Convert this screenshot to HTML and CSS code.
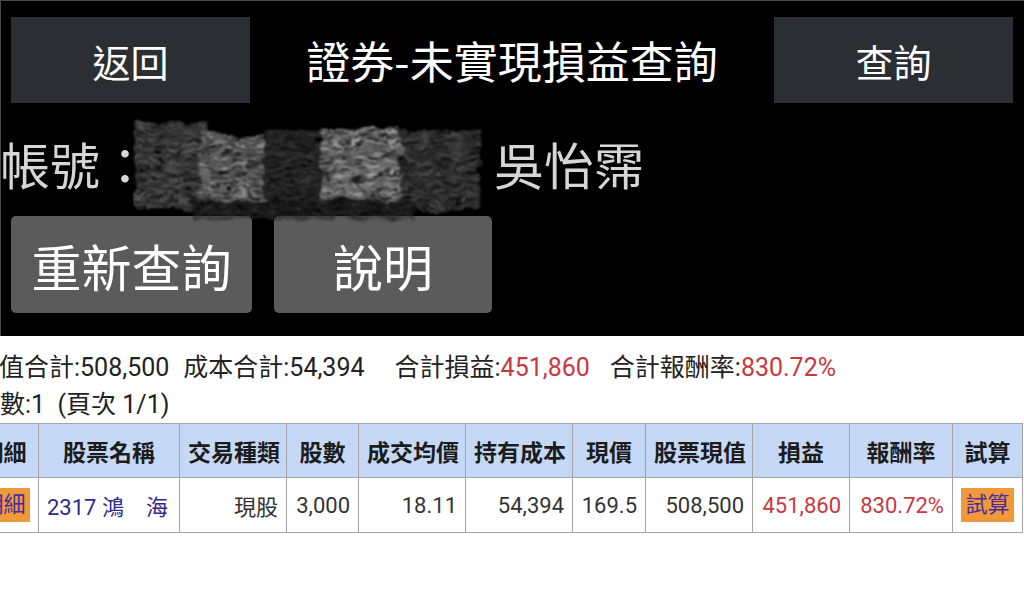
FILE: index.html
```html
<!DOCTYPE html>
<html lang="zh-Hant">
<head>
<meta charset="utf-8">
<title>證券-未實現損益查詢</title>
<link rel="stylesheet" href="styles.css">
</head>
<body>
<div class="top">
  <div class="bar">
    <div class="btn btn-dark">返回</div>
    <div class="title">證券-未實現損益查詢</div>
    <div class="btn btn-dark">查詢</div>
  </div>
  <div class="acct">
    <span class="label">帳號：</span>
    <svg class="redact" viewBox="0 0 350 107" width="350" height="107" aria-hidden="true">
      <defs>
        <filter id="soft" x="-10%" y="-15%" width="120%" height="130%">
          <feTurbulence type="fractalNoise" baseFrequency="0.06 0.8" numOctaves="2" seed="7" result="grain"/>
          <feColorMatrix in="grain" type="matrix" values="0 0 0 0 1  0 0 0 0 1  0 0 0 0 1  2.4 0 0 0 -0.6" result="mask"/>
          <feComposite in="SourceGraphic" in2="mask" operator="in" result="tex"/>
          <feTurbulence type="fractalNoise" baseFrequency="0.04 0.08" numOctaves="3" seed="3" result="noise"/>
          <feDisplacementMap in="tex" in2="noise" scale="14" xChannelSelector="R" yChannelSelector="G" result="disp"/>
          <feGaussianBlur in="disp" stdDeviation="1.1"/>
        </filter>
      </defs>
      <g filter="url(#soft)">
        <rect x="2" y="2" width="72" height="90" fill="#5a5a5a"/>
        <rect x="67" y="15" width="63" height="67" fill="#8a8a8a"/>
        <rect x="130" y="12" width="57" height="80" fill="#383838"/>
        <rect x="187" y="10" width="80" height="85" fill="#a0a0a0"/>
        <rect x="267" y="12" width="80" height="80" fill="#4c4c4c"/>
        <rect x="60" y="82" width="220" height="20" fill="#2a2a2a"/>
      </g>
    </svg>
    <span class="name">吳怡霈</span>
  </div>
  <div class="actions">
    <div class="btn btn-gray w1">重新查詢</div>
    <div class="btn btn-gray w2">說明</div>
  </div>
</div>
<div class="content">
  <div class="line line1"><span>值合計:508,500</span><span class="g1">成本合計:54,394</span><span class="g2">合計損益:<em class="red">451,860</em></span><span class="g3">合計報酬率:<em class="red">830.72%</em></span></div>
  <div class="line line2">數:1&nbsp;&nbsp;(頁次 1/1)</div>
  <table class="grid">
    <colgroup>
      <col class="c70"><col class="c141"><col class="c107"><col class="c72"><col class="c107"><col class="c107"><col class="c73"><col class="c107"><col class="c97"><col class="c103"><col class="c70">
    </colgroup>
    <thead>
      <tr>
        <th>明細</th><th>股票名稱</th><th>交易種類</th><th>股數</th><th>成交均價</th><th>持有成本</th><th>現價</th><th>股票現值</th><th>損益</th><th>報酬率</th><th>試算</th>
      </tr>
    </thead>
    <tbody>
      <tr>
        <td class="center"><span class="tbtn">明細</span></td>
        <td class="left stock">2317 鴻　海</td>
        <td>現股</td>
        <td>3,000</td>
        <td>18.11</td>
        <td>54,394</td>
        <td>169.5</td>
        <td>508,500</td>
        <td class="red">451,860</td>
        <td class="red">830.72%</td>
        <td class="center"><span class="tbtn">試算</span></td>
      </tr>
    </tbody>
  </table>
</div>
</body>
</html>
```

FILE: styles.css
```css
* { box-sizing: border-box; }

body {
  margin: 0;
  width: 1024px;
  height: 607px;
  overflow: hidden;
  background: #ffffff;
  font-family: Roboto, "Noto Sans CJK TC", sans-serif;
}

.top {
  background: #000;
  padding: 17px 11px 23px;
  box-shadow: inset 1px 1px 0 #4a4a4a;
}

.bar {
  display: flex;
  justify-content: space-between;
  align-items: center;
  height: 86px;
}

.btn {
  display: flex;
  align-items: center;
  justify-content: center;
  color: #fff;
  font-family: "Noto Sans CJK TC", sans-serif;
}

.btn-dark {
  width: 239px;
  height: 86px;
  background: #2b2e33;
  font-size: 38px;
}

.title {
  color: #fff;
  font-size: 44px;
  font-family: "Noto Sans CJK TC", sans-serif;
}

.acct {
  display: flex;
  align-items: center;
  height: 113px;
  padding-top: 7px;
  margin-left: -11px;
  font-family: "Noto Sans CJK TC", sans-serif;
}

.label,
.name {
  font-size: 50px;
  color: #d6d6d6;
  white-space: nowrap;
}

.redact {
  align-self: flex-start;
  margin-top: 8px;
  margin-left: -17px;
  position: relative;
  z-index: 1;
  flex: none;
}

.name {
  margin-left: 11px;
}

.actions {
  display: flex;
  gap: 22px;
  height: 97px;
}

.btn-gray {
  height: 97px;
  background: #5b5b5b;
  border-radius: 5px;
  font-size: 50px;
}

.w1 { width: 241px; }
.w2 { width: 218px; }

.content {
  padding-top: 13px;
  font-size: 25px;
  color: #222;
}

.line {
  line-height: 37px;
  white-space: nowrap;
}

.line1 { margin-left: -1px; }
.line2 { margin-left: 0; }

.g1 { margin-left: 14px; }
.g2 { margin-left: 30px; }
.g3 { margin-left: 20px; }

.red {
  color: #c9383f;
  font-style: normal;
}

.grid {
  border-collapse: collapse;
  table-layout: fixed;
  width: 1054px;
  margin-left: -32px;
  font-size: 22px;
}

.c70 { width: 70px; }
.c141 { width: 141px; }
.c107 { width: 107px; }
.c72 { width: 72px; }
.c73 { width: 73px; }
.c97 { width: 97px; }
.c103 { width: 103px; }

.grid th,
.grid td {
  border: 1px solid #a4a4a4;
  padding: 0 8px;
  white-space: nowrap;
  overflow: hidden;
}

.grid th {
  background: #c5d9f7;
  height: 54px;
  font-size: 23px;
  font-weight: bold;
  color: #1c1c1c;
  text-align: center;
}

.grid td {
  height: 55px;
  text-align: right;
  color: #333;
}

.grid td.left { text-align: left; }
.grid td.center { text-align: center; padding: 0; }
.grid td.red { color: #c9383f; }

.stock { color: #302a8c !important; }

.tbtn {
  display: inline-block;
  background: #ef993a;
  color: #4b2ca0;
  font-size: 22px;
  line-height: 34px;
  padding: 0 4px;
  vertical-align: middle;
}
```
